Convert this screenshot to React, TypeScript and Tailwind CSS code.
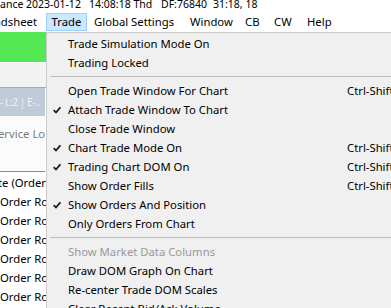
import React from "react";

type Item =
  | { kind: "item"; label: string; check?: boolean; shortcut?: string; disabled?: boolean }
  | { kind: "sep" };

const items: Item[] = [
  { kind: "item", label: "Trade Simulation Mode On" },
  { kind: "item", label: "Trading Locked" },
  { kind: "sep" },
  { kind: "item", label: "Open Trade Window For Chart", shortcut: "Ctrl-Shift+T" },
  { kind: "item", label: "Attach Trade Window To Chart", check: true },
  { kind: "item", label: "Close Trade Window" },
  { kind: "item", label: "Chart Trade Mode On", check: true, shortcut: "Ctrl-Shift+C" },
  { kind: "item", label: "Trading Chart DOM On", check: true, shortcut: "Ctrl-Shift+D" },
  { kind: "item", label: "Show Order Fills", shortcut: "Ctrl-Shift+F" },
  { kind: "item", label: "Show Orders And Position", check: true },
  { kind: "item", label: "Only Orders From Chart" },
  { kind: "sep" },
  { kind: "item", label: "Show Market Data Columns", disabled: true },
  { kind: "item", label: "Draw DOM Graph On Chart" },
  { kind: "item", label: "Re-center Trade DOM Scales" },
  { kind: "item", label: "Clear Recent Bid/Ask Volume" },
];

function Check() {
  return (
    <svg width="8" height="8" viewBox="0 0 8 8" className="block">
      <path d="M0.7 4.1 L3 6.5 L7.4 1.3" fill="none" stroke="#1a1a1a" strokeWidth="1.8" />
    </svg>
  );
}

export default function App() {
  return (
    <div className="relative w-[391px] h-[308px] overflow-hidden bg-white text-black text-[11.3px] font-['Noto_Sans',sans-serif]">
      {/* title strip */}
      <div className="h-[12px] overflow-hidden">
        <div className="-mt-[4px] leading-[16px] whitespace-nowrap flex text-[10.5px]">
          <span className="w-[89px]">ance 2023-01-12</span>
          <span className="w-[72px]">14:08:18 Thd</span>
          <span className="w-[52px]">DF:76840</span>
          <span>31:18, 18</span>
        </div>
      </div>
      {/* menu bar */}
      <div className="h-[20px] flex items-center whitespace-nowrap">
        <div className="w-[46px] flex justify-end pr-[9px] overflow-hidden leading-[18px]">Spreadsheet</div>
        <div className="w-[41px] h-[18px] flex items-center justify-center bg-[#cce8ff] border border-[#99d1ff]">Trade</div>
        <div className="w-[96px] pl-[7px] leading-[18px]">Global Settings</div>
        <div className="w-[55px] pl-[7px] leading-[18px]">Window</div>
        <div className="w-[29px] pl-[7px] leading-[18px]">CB</div>
        <div className="w-[33px] pl-[7px] leading-[18px]">CW</div>
        <div className="pl-[7px] leading-[18px]">Help</div>
      </div>
      {/* background window (left) */}
      <div className="w-[46px] flex flex-col whitespace-nowrap overflow-hidden">
        <div className="h-[30px] bg-[#55e855]" />
        <div className="h-[26px] bg-[#f3f3f3] border-t border-[#ffffff] border-b border-b-[#a9a9a9]" />
        <div className="h-[28px] bg-[#bfcbd8] text-[#eef2f6] flex items-center leading-[16px] text-[10px] tracking-[-0.4px] w-[45px] overflow-hidden">
          - L:2 | E-..
        </div>
        <div className="h-[56px] bg-[#fbfbfb] border-b border-[#8a8a8a] pt-[8px] leading-[19px] w-[45px]">
          <div className="-ml-[2px] text-[#7c7c7c]">ervice Lo</div>
          <div className="text-[#5d8fc4] mt-[7px] -ml-[4px]">t</div>
        </div>
        <div className="flex flex-col leading-[19px] pt-[1px]">
          <div className="-ml-[2px]">te (Order</div>
          <div>Order Ro</div>
          <div>Order Ro</div>
          <div>Order Ro</div>
          <div>Order Ro</div>
          <div>Order Ro</div>
          <div>Order Ro</div>
        </div>
      </div>
      {/* dropdown menu */}
      <div className="absolute left-[46px] top-[32px] w-[420px] bg-[#f0f0f0] border border-[#cccccc] pt-[1px] whitespace-nowrap">
        {items.map((it, i) =>
          it.kind === "sep" ? (
            <div key={i} className="h-[9px] flex items-center pl-[3px]">
              <div className="h-px w-full bg-[#bdbdbd]" />
            </div>
          ) : (
            <div key={i} className="h-[19px] flex items-center">
              <div className="w-[21px] pl-[6px] flex items-center">{it.check ? <Check /> : null}</div>
              <div className={"w-[279px] leading-[19px] " + (it.disabled ? "text-[#9a9a9a]" : "text-black")}>
                {it.label}
              </div>
              <div className="leading-[19px]">{it.shortcut ?? ""}</div>
            </div>
          )
        )}
      </div>
    </div>
  );
}
